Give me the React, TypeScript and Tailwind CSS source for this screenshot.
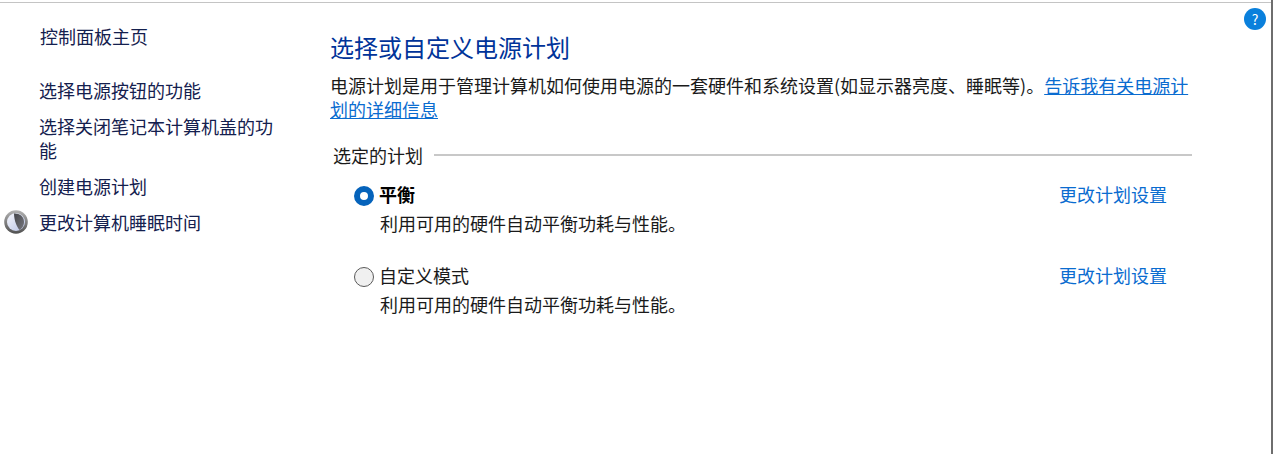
const font = "font-['Noto_Sans_CJK_SC','Noto_Sans',sans-serif]";

function Moon() {
  return (
    <svg viewBox="0 0 24 24" className="w-6 h-6 shrink-0">
      <defs>
        <linearGradient id="ring" x1="0" y1="0" x2="0" y2="1">
          <stop offset="0" stopColor="#b4b4b4" />
          <stop offset="1" stopColor="#505050" />
        </linearGradient>
        <linearGradient id="face" x1="0" y1="0" x2="1" y2="1">
          <stop offset="0" stopColor="#f6f8fd" />
          <stop offset="1" stopColor="#b8c2e4" />
        </linearGradient>
        <linearGradient id="shade" x1="0" y1="0" x2="1" y2="1">
          <stop offset="0" stopColor="#44454a" />
          <stop offset="1" stopColor="#77787e" />
        </linearGradient>
      </defs>
      <circle cx="12" cy="12" r="11.8" fill="url(#ring)" />
      <circle cx="12" cy="12" r="9" fill="url(#face)" />
      <path d="M10 3.6C15 3.2 19.8 6 20 11.5 20.2 15.5 18 18.6 15.6 20 12.8 17 10.2 11 10 3.6Z" fill="url(#shade)" />
    </svg>
  );
}

function Plan({ name, bold, checked }: { name: string; bold?: boolean; checked?: boolean }) {
  return (
    <div className="flex justify-between pr-[25px]">
      <div className="flex flex-col">
        <div className="flex items-center h-6">
          {checked ? (
            <span className="w-5 h-5 mt-1 rounded-full border-[6px] border-[#0563bb] bg-white" />
          ) : (
            <span className="w-5 h-5 mt-1 rounded-full border border-[#5a5a5a] bg-[#f0f0f0]" />
          )}
          <span className={bold ? "ml-[5px] font-bold text-black" : "ml-[5px] text-[#1a1a1a]"}>{name}</span>
        </div>
        <p className="ml-[26px] mt-[5px] h-6 text-[#1a1a1a]">利用可用的硬件自动平衡功耗与性能。</p>
      </div>
      <a className="h-6 text-[#0a6cd0]">更改计划设置</a>
    </div>
  );
}

export default function App() {
  return (
    <div className={`${font} w-[1273px] h-[454px] bg-white overflow-hidden flex text-[18px] leading-6`}>
      <div className="flex-1 min-w-0 flex flex-col">
        <div className="mt-[2px] h-[1px] bg-[#c4c4c4]" />
        <div className="flex flex-1">
          <aside className="w-[330px] shrink-0 text-[#14204e]">
            <div className="pl-[40px] mt-[21px]">控制面板主页</div>
            <nav className="mt-[30px] flex flex-col gap-3">
              <div className="pl-[39px]">选择电源按钮的功能</div>
              <div className="pl-[39px] w-[280px]">选择关闭笔记本计算机盖的功能</div>
              <div className="pl-[39px]">创建电源计划</div>
              <div className="flex items-center pl-[4px] gap-[11px]">
                <Moon />
                <span>更改计算机睡眠时间</span>
              </div>
            </nav>
          </aside>
          <main className="w-[862px] shrink-0">
            <h1 className="mt-[28px] text-[24px] leading-8 text-[#003399]">选择或自定义电源计划</h1>
            <p className="mt-[10px] text-[#1a1a1a]">
              电源计划是用于管理计算机如何使用电源的一套硬件和系统设置(如显示器亮度、睡眠等)。
              <a className="text-[#0a6cd0] underline">告诉我有关电源计划的详细信息</a>
            </p>
            <div className="mt-[22px] ml-[3px] flex items-center gap-[11px] text-[#1a1a1a]">
              <span>选定的计划</span>
              <div className="flex-1 h-[2px] bg-[#c8c8c8]" />
            </div>
            <div className="mt-[15px] ml-[24px] flex flex-col gap-[28px]">
              <Plan name="平衡" bold checked />
              <Plan name="自定义模式" />
            </div>
          </main>
          <div className="flex-1 relative">
            <span className="absolute right-[5px] top-[5px] w-[22px] h-[22px] rounded-full bg-[#0a80dc] text-white text-[14px] font-normal leading-[22px] text-center">?</span>
          </div>
        </div>
      </div>
      <div className="w-[2px] bg-[#6e6e6e]" />
    </div>
  );
}
